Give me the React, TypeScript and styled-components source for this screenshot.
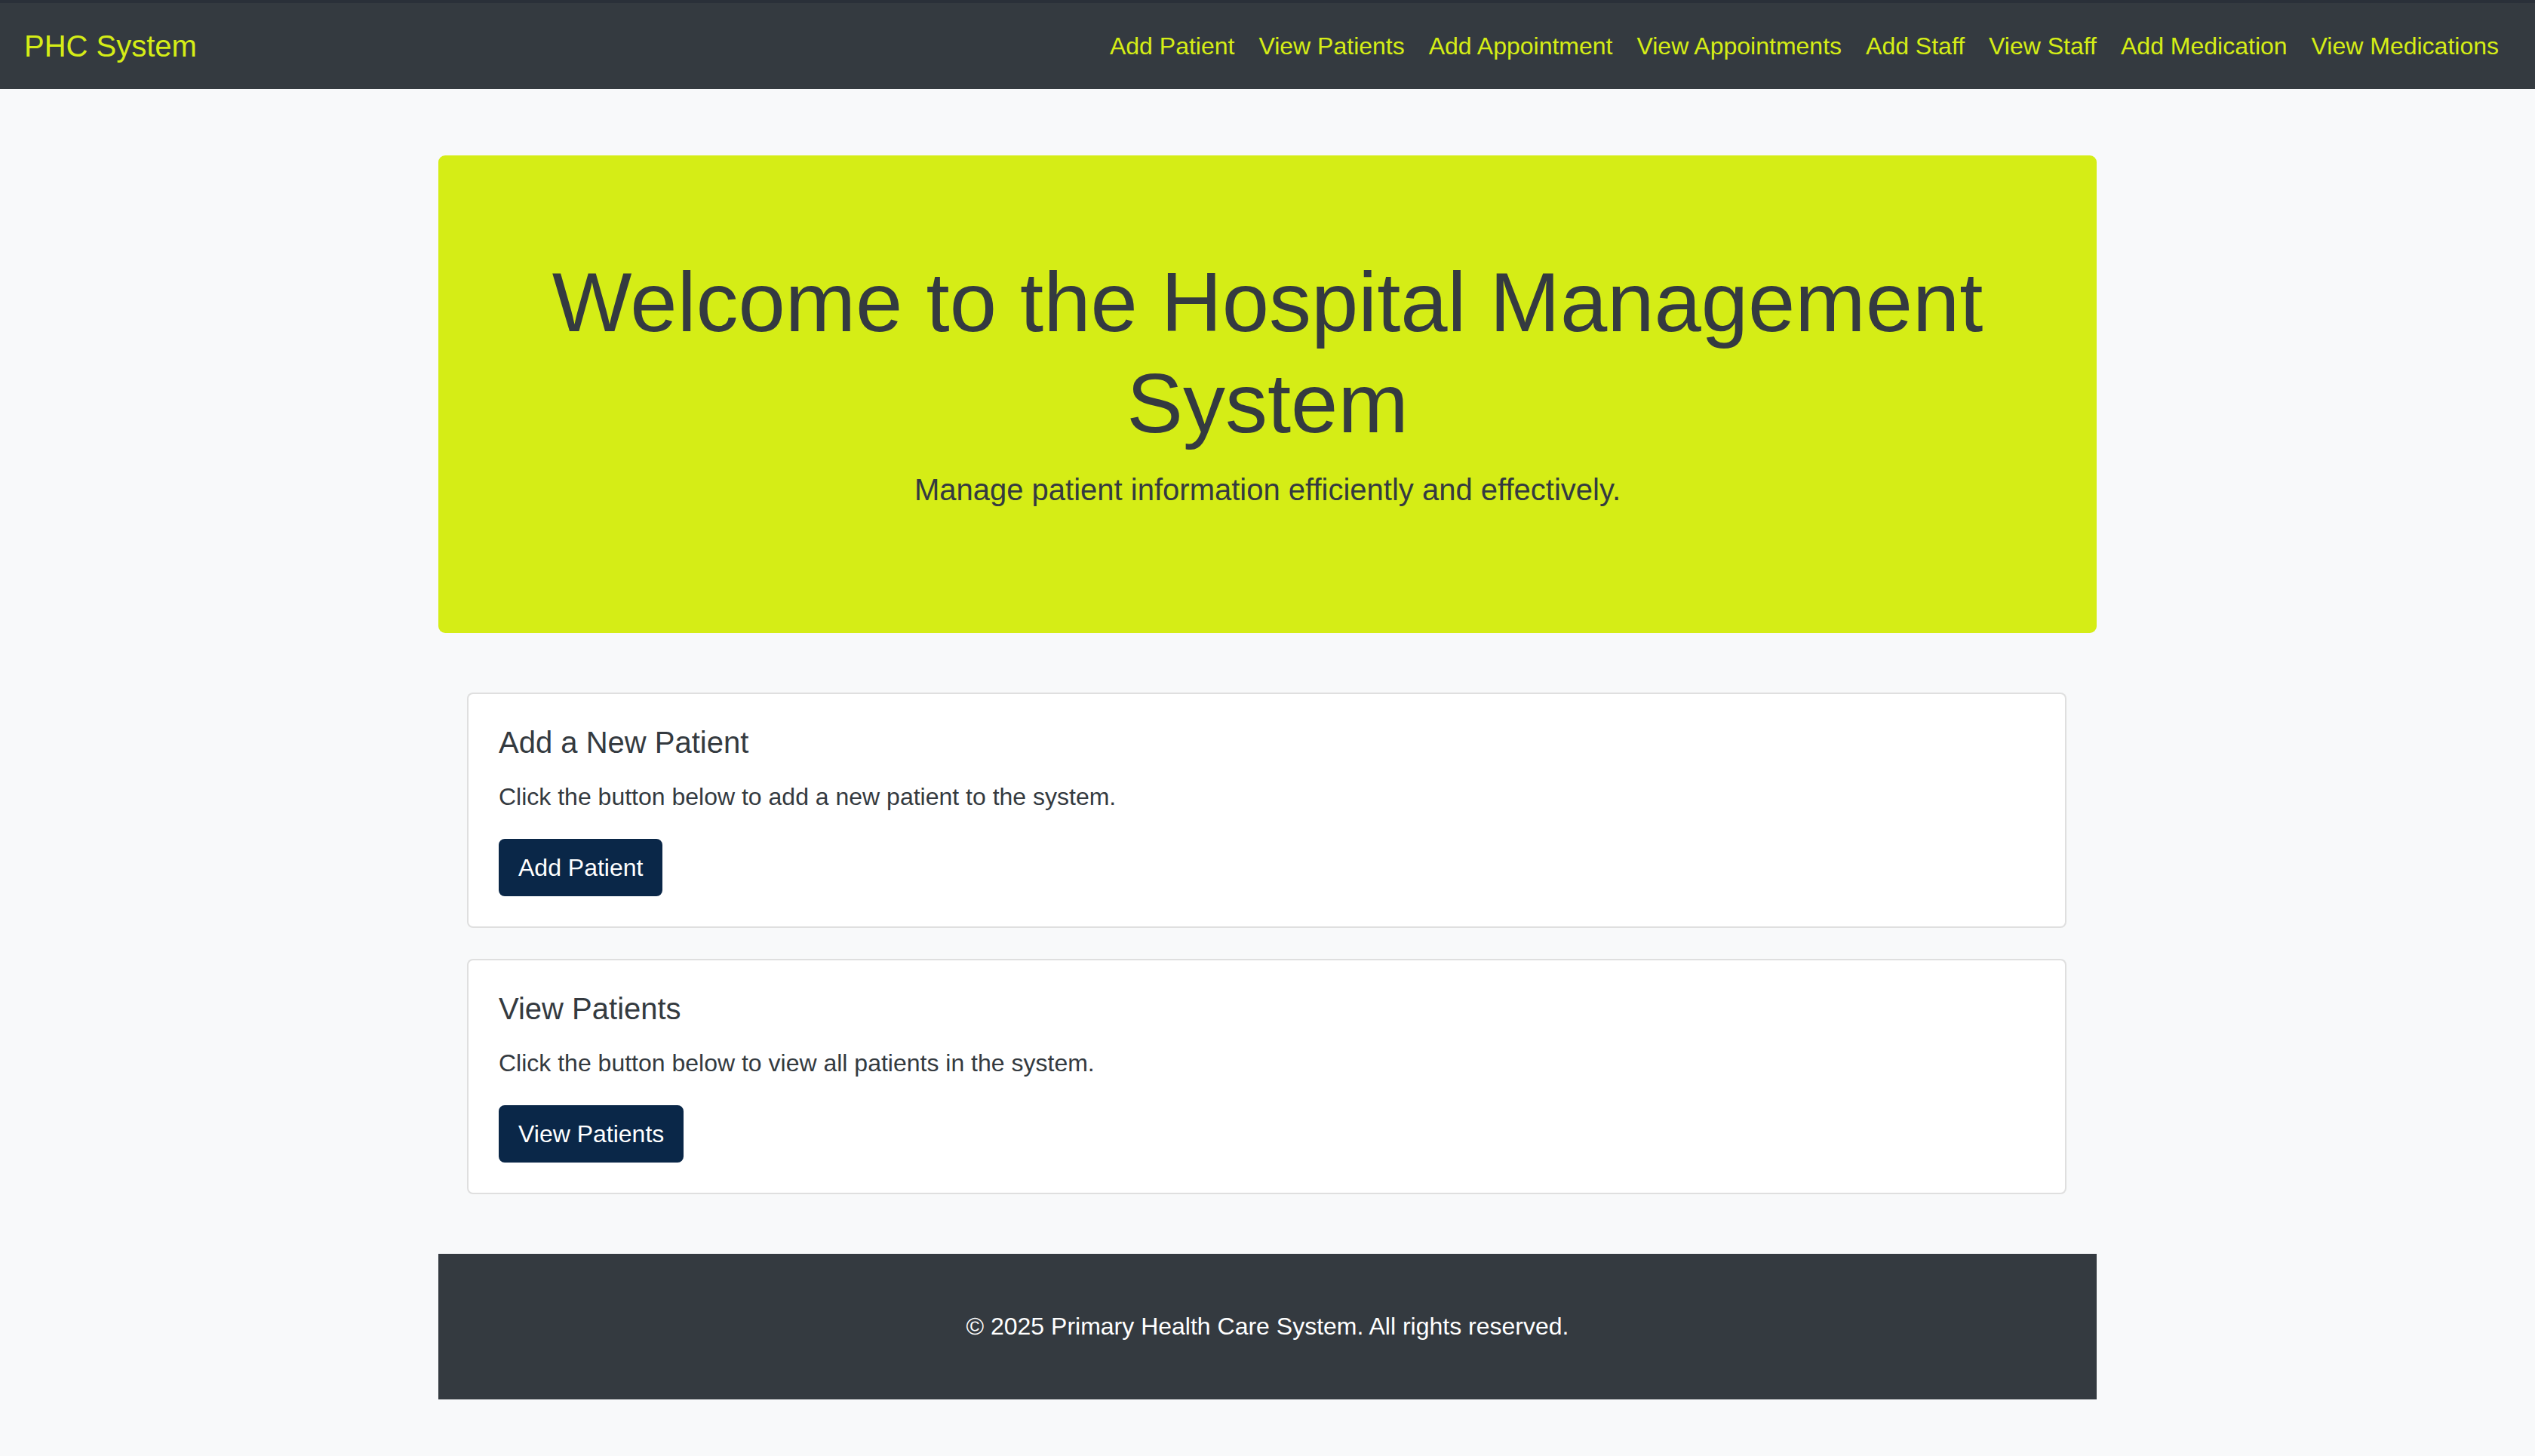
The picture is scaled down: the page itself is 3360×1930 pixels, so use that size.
import styled, { createGlobalStyle } from 'styled-components'

const GlobalStyle = createGlobalStyle`
  html,
  body {
    margin: 0;
    padding: 0;
    background: #f8f9fa;
    font-family: 'Liberation Sans', Arial, Helvetica, sans-serif;
    color: #212529;
  }

  * {
    box-sizing: border-box;
  }
`

const navLinks = [
  'Add Patient',
  'View Patients',
  'Add Appointment',
  'View Appointments',
  'Add Staff',
  'View Staff',
  'Add Medication',
  'View Medications'
]

const cards = [
  {
    title: 'Add a New Patient',
    text: 'Click the button below to add a new patient to the system.',
    action: 'Add Patient'
  },
  {
    title: 'View Patients',
    text: 'Click the button below to view all patients in the system.',
    action: 'View Patients'
  }
]

export default function App() {
  return (
    <>
      <GlobalStyle />
      <StyledNavbar>
        <StyledBrand href="#">PHC System</StyledBrand>
        <StyledNavList>
          {navLinks.map((link) => (
            <li key={link}>
              <StyledNavLink href="#">{link}</StyledNavLink>
            </li>
          ))}
        </StyledNavList>
      </StyledNavbar>

      <StyledMain>
        <StyledHero>
          <StyledHeroTitle>Welcome to the Hospital Management System</StyledHeroTitle>
          <StyledHeroLead>Manage patient information efficiently and effectively.</StyledHeroLead>
        </StyledHero>

        <StyledCardList>
          {cards.map((card) => (
            <StyledCard key={card.title}>
              <StyledCardTitle>{card.title}</StyledCardTitle>
              <StyledCardText>{card.text}</StyledCardText>
              <StyledButton type="button">{card.action}</StyledButton>
            </StyledCard>
          ))}
        </StyledCardList>

        <StyledFooter>
          <p>&copy; 2025 Primary Health Care System. All rights reserved.</p>
        </StyledFooter>
      </StyledMain>
    </>
  )
}

const lime = '#d5ed16'
const dark = '#343a40'

const StyledNavbar = styled.nav`
  display: flex;
  align-items: center;
  justify-content: space-between;
  height: 118px;
  padding: 0 32px;
  background: ${dark};
  border-top: 4px solid #2a3039;
`

const StyledBrand = styled.a`
  color: ${lime};
  font-size: 40px;
  line-height: 60px;
  text-decoration: none;
`

const StyledNavList = styled.ul`
  display: flex;
  margin: 0;
  padding: 0;
  list-style: none;
`

const StyledNavLink = styled.a`
  display: block;
  padding: 16px;
  color: ${lime};
  font-size: 32px;
  line-height: 48px;
  text-decoration: none;
`

const StyledMain = styled.main`
  width: 2198px;
  margin: 88px auto 0;
  padding-bottom: 74px;
`

const StyledHero = styled.section`
  padding: 128px 64px;
  background: ${lime};
  border-radius: 9px;
  text-align: center;
  color: ${dark};
`

const StyledHeroTitle = styled.h1`
  margin: 0 0 16px;
  font-size: 112px;
  font-weight: 400;
  line-height: 1.2;
`

const StyledHeroLead = styled.p`
  margin: 0 0 32px;
  font-size: 40px;
  line-height: 1.5;
`

const StyledCardList = styled.div`
  display: flex;
  flex-direction: column;
  gap: 41px;
  margin-top: 79px;
  padding: 0 40px 0 38px;
`

const StyledCard = styled.div`
  padding: 40px;
  background: #ffffff;
  border: 2px solid rgba(0, 0, 0, 0.125);
  border-radius: 8px;
`

const StyledCardTitle = styled.h5`
  margin: 0 0 24px;
  font-size: 40px;
  font-weight: 400;
  line-height: 1.2;
  color: ${dark};
`

const StyledCardText = styled.p`
  margin: 0 0 32px;
  font-size: 32px;
  line-height: 1.5;
  color: ${dark};
`

const StyledButton = styled.button`
  display: inline-block;
  padding: 12px 24px;
  font-family: inherit;
  font-size: 32px;
  line-height: 1.5;
  color: #ffffff;
  background: #0a2748;
  border: 2px solid #0a2748;
  border-radius: 8px;
  cursor: pointer;
`

const StyledFooter = styled.footer`
  margin-top: 79px;
  padding: 72px 0 73px;
  background: ${dark};
  text-align: center;
  color: #ffffff;

  p {
    margin: 0;
    font-size: 32px;
    line-height: 48px;
  }
`
